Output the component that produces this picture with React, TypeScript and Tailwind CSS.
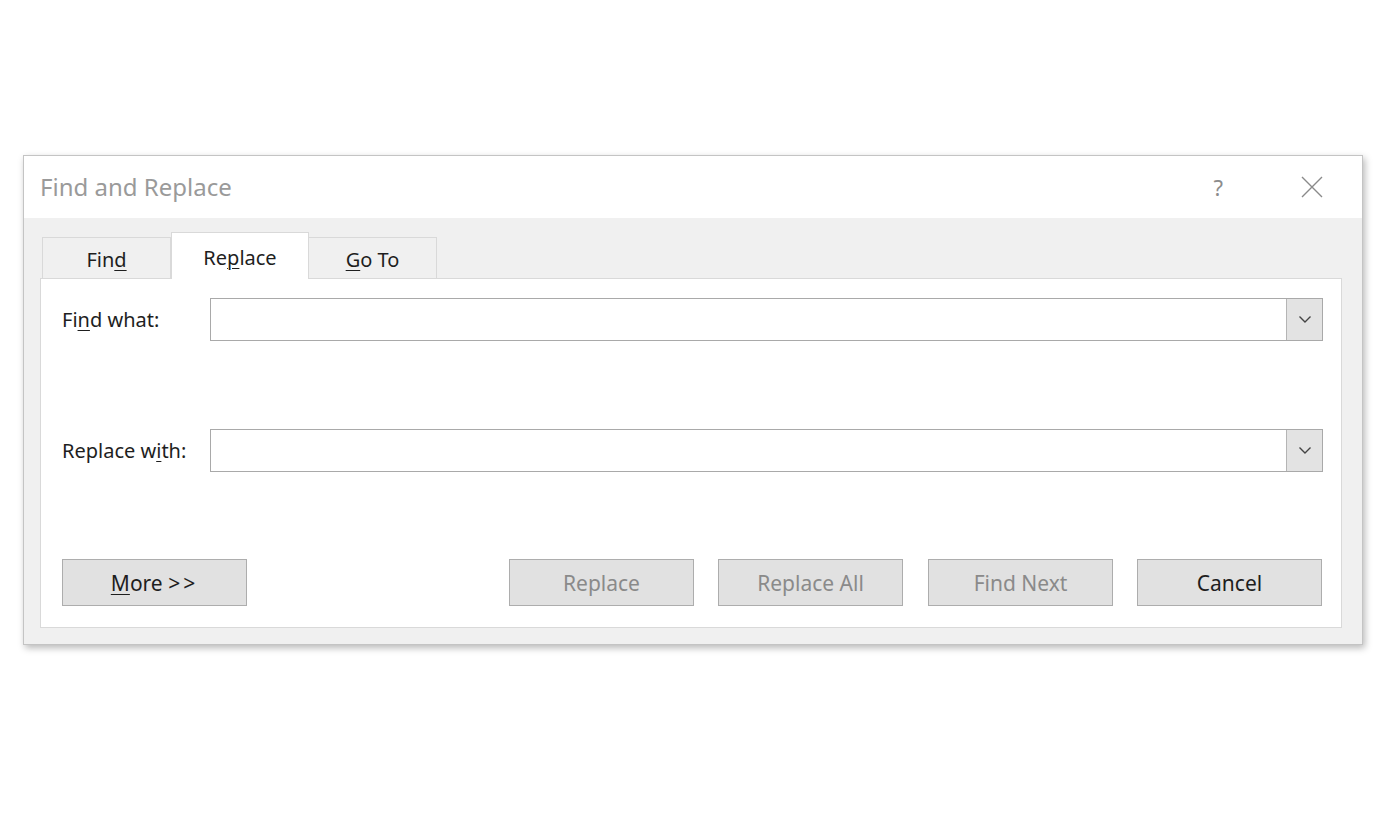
import { ReactNode } from 'react';

const font = { fontFamily: '"Noto Sans", "Open Sans", sans-serif' };

// access-key letter, underlined like a Windows dialog
const Key = ({ children }: { children: ReactNode }) => (
	<span className="underline underline-offset-[3px] decoration-1">{children}</span>
);

const Chevron = () => (
	<svg width="14" height="9" viewBox="0 0 14 9" fill="none">
		<path d="M1.5 1.5 L7 7 L12.5 1.5" stroke="#444" strokeWidth="1.4" />
	</svg>
);

const ComboBox = () => (
	<div className="flex flex-1 h-[43px] border border-[#a9a9a9] bg-white">
		<div className="flex-1" />
		<div className="w-[36px] flex items-center justify-center bg-[#e3e3e3] border-l border-[#b5b5b5]">
			<Chevron />
		</div>
	</div>
);

const DialogButton = ({
	children,
	disabled,
	className = '',
}: {
	children: ReactNode;
	disabled?: boolean;
	className?: string;
}) => (
	<button
		className={`w-[185px] h-[47px] pt-[3px] bg-[#e1e1e1] border border-[#adadad] text-[21px] ${
			disabled ? 'text-[#8a8a8a]' : 'text-[#1e1e1e]'
		} ${className}`}
	>
		{children}
	</button>
);

const Tab = ({
	children,
	active,
	className = '',
}: {
	children: ReactNode;
	active?: boolean;
	className?: string;
}) =>
	active ? (
		<div className="w-[138px] h-[47px] -mb-px pt-[3px] bg-white border border-b-0 border-[#d9d9d9] flex items-center justify-center text-[20px] text-[#1e1e1e] relative z-10">
			{children}
		</div>
	) : (
		<div
			className={`w-[129px] h-[41px] bg-[#f0f0f0] border border-b-0 border-[#d9d9d9] flex items-center justify-center text-[20px] text-[#1e1e1e] pt-[4px] ${className}`}
		>
			{children}
		</div>
	);

export default function App() {
	return (
		<div className="w-[1392px] h-[814px] bg-white overflow-hidden" style={font}>
			<div className="pt-[155px] pl-[23px]">
				<div className="w-[1340px] h-[490px] border border-[#c4c4c4] shadow-[2px_3px_7px_rgba(0,0,0,0.28)] flex flex-col bg-[#f0f0f0]">
					{/* title bar */}
					<div className="h-[62px] bg-white flex items-center pl-[16px] pr-[38px]">
						<span className="text-[24px] text-[#9a9a9a]">Find and Replace</span>
						<div className="flex-1" />
						<span className="text-[22px] text-[#8c8c8c] mr-[77px]">?</span>
						<svg width="24" height="24" viewBox="0 0 24 24" fill="none">
							<path d="M2 2 L22 22 M22 2 L2 22" stroke="#8a8a8a" strokeWidth="1.4" />
						</svg>
					</div>

					{/* tabs + page */}
					<div className="flex-1 flex flex-col pl-[16px] pr-[20px] pt-[14px] pb-[16px]">
						<div className="flex items-end pl-[2px] h-[46px]">
							<Tab>
								Fin<Key>d</Key>
							</Tab>
							<Tab active>
								Re<Key>p</Key>lace
							</Tab>
							<Tab className="-ml-px">
								<Key>G</Key>o To
							</Tab>
						</div>
						<div className="flex-1 bg-white border border-[#d9d9d9] flex flex-col pl-[21px] pr-[18px] pt-[19px] pb-[21px] text-[20px] text-[#1e1e1e]">
							<div className="flex items-center">
								<span className="w-[148px]">
									Fi<Key>n</Key>d what:
								</span>
								<ComboBox />
							</div>
							<div className="flex items-center mt-[88px]">
								<span className="w-[148px]">
									Replace w<Key>i</Key>th:
								</span>
								<ComboBox />
							</div>
							<div className="flex-1" />
							<div className="flex items-center pr-[1px]">
								<DialogButton>
									<Key>M</Key>ore <span className="tracking-[3px]">&gt;&gt;</span>
								</DialogButton>
								<div className="flex-1" />
								<DialogButton disabled>Replace</DialogButton>
								<DialogButton disabled className="ml-[24px]">
									Replace All
								</DialogButton>
								<DialogButton disabled className="ml-[25px]">
									Find Next
								</DialogButton>
								<DialogButton className="ml-[24px]">Cancel</DialogButton>
							</div>
						</div>
					</div>
				</div>
			</div>
		</div>
	);
}
